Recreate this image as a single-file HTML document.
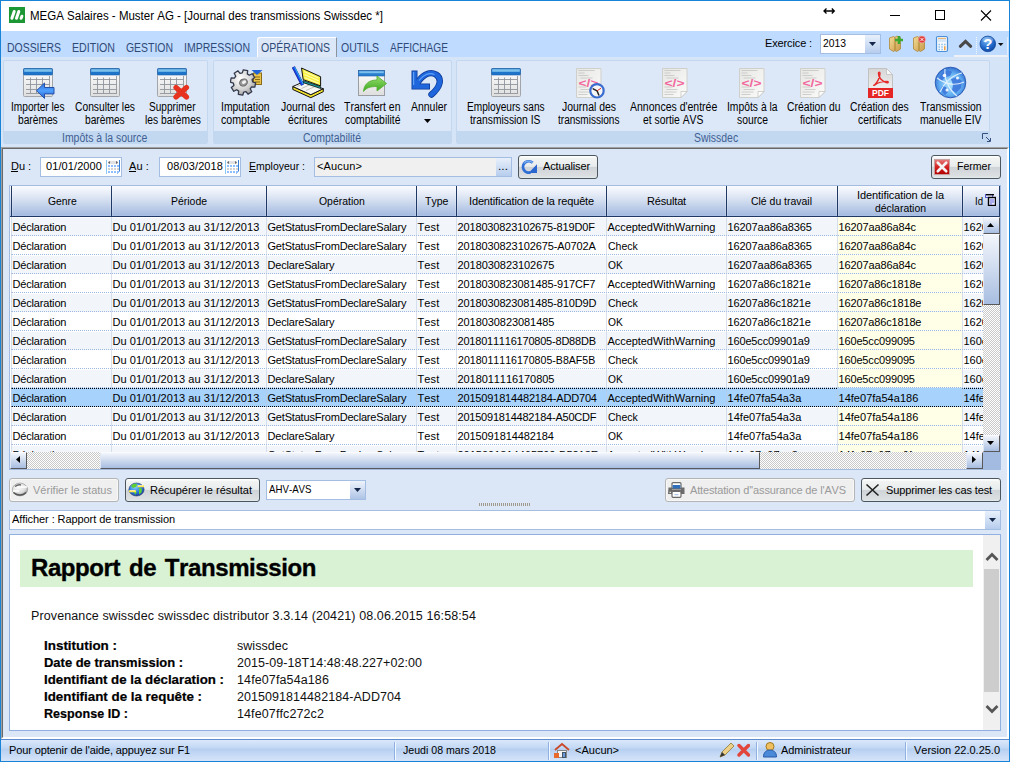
<!DOCTYPE html>
<html lang="fr">
<head>
<meta charset="utf-8">
<title>MEGA Salaires - Muster AG - [Journal des transmissions Swissdec *]</title>
<style>
html,body{margin:0;padding:0}
body{width:1010px;height:762px;overflow:hidden;position:relative;background:#fff;font-family:"Liberation Sans",sans-serif;font-size:11px;color:#000;font-kerning:none}
div,span,section,header,footer,nav,button,svg,table{position:absolute;box-sizing:border-box}
.t{white-space:pre;display:block;transform-origin:0 50%}
.g{left:0;top:0;width:0;height:0}
button{font:inherit;margin:0;padding:0;color:inherit}
.btn{border:1px solid #4b565e;border-radius:3px;background:linear-gradient(#fff 0,#fff 1px,#f2f4f4 2px,#e9ecec 47%,#cfd4d8 52%,#dcdfe2 92%,#e2eeee 100%)}
.btn.dis{border-color:#b4b4b4;background:#efefef;box-shadow:inset 0 0 0 1px #f8f8f8}
.inp{border:1px solid #a3bde3;background:#fff}
.hd{background:linear-gradient(#f4f7fc 0,#dbe5f5 30%,#a9c0e3 85%,#c3d3ec 100%);border-right:1px solid #2b4b7c}
.r{left:0;width:972px;height:19px;border-bottom:1px dotted #9db9df;border-top:1px solid #fff}
.r .t{margin-top:-1px}
.r>div{margin-top:-1px;height:18px!important}
.ra{background:#f2f6fb}
.rs{background:#a6d2fb;border-top:1px dotted #000;border-bottom:1px dotted #000}
</style>
</head>
<body>
<header class="g">
<div style="left:0px;top:0px;width:1010px;height:762px;background:#dbe7f7;border:1px solid #1883d7"></div>
<div style="left:1px;top:1px;width:1008px;height:30px;background:#fff"></div>
<svg style="left:9px;top:7px" width="16" height="16" viewBox="0 0 16 16"><rect width="16" height="16" fill="#1d9733"/><path d="M2.900 11.300L5.200 4.500M7.500 11.300L9.800 4.500M12.100 11.300L12.900 9.200" stroke="#fff" stroke-width="3" stroke-linecap="round"/></svg>
<span class="t" style="left:30.00px;top:7.84px;font-size:12px;line-height:16px;transform:scaleX(0.9589);">MEGA Salaires - Muster AG - [Journal des transmissions Swissdec *]</span>
<svg style="left:820px;top:0" width="190" height="31" viewBox="0 0 190 31" fill="none" stroke="#000" stroke-width="1"><path d="M70 15.5h10"/><rect x="115.5" y="10.5" width="9" height="9"/><path d="M161 10.500l10 10M171 10.500l-10 10" stroke-width="1.100"/><path d="M4.500 11h9.500M6.500 8.500l-2.500 2.500 2.500 2.500M11.800 8.500l2.500 2.500-2.500 2.500" stroke-width="1.300"/></svg>
</header>
<nav class="g">
<div style="left:1px;top:31px;width:1008px;height:26px;background:#bfdbff"></div>
<div style="left:1px;top:57px;width:1008px;height:90px;background:#d6e4f7"></div>
<div style="left:257px;top:37px;width:80px;height:20px;background:#dce7f7;border:1px solid;border-color:#fff #8c929c #dce7f7 #fff;border-bottom:none;border-radius:3px 1px 0 0"></div>
<span class="t" style="left:7.00px;top:39.84px;font-size:12px;line-height:16px;transform:scaleX(0.8707);color:#2f4a78;">DOSSIERS</span>
<span class="t" style="left:72.00px;top:39.84px;font-size:12px;line-height:16px;transform:scaleX(0.8835);color:#2f4a78;">EDITION</span>
<span class="t" style="left:126.00px;top:39.84px;font-size:12px;line-height:16px;transform:scaleX(0.8703);color:#2f4a78;">GESTION</span>
<span class="t" style="left:184.00px;top:39.84px;font-size:12px;line-height:16px;transform:scaleX(0.8760);color:#2f4a78;">IMPRESSION</span>
<span class="t" style="left:261.00px;top:39.84px;font-size:12px;line-height:16px;transform:scaleX(0.8770);color:#2f4a78;">OPÉRATIONS</span>
<span class="t" style="left:341.00px;top:39.84px;font-size:12px;line-height:16px;transform:scaleX(0.8768);color:#2f4a78;">OUTILS</span>
<span class="t" style="left:390.00px;top:39.84px;font-size:12px;line-height:16px;transform:scaleX(0.8446);color:#2f4a78;">AFFICHAGE</span>
<span class="t" style="left:765.00px;top:35.69px;font-size:11px;line-height:15px;letter-spacing:-0.129px;">Exercice :</span>
<div class="inp" style="left:820px;top:34px;width:61px;height:20px;"></div>
<span class="t" style="left:823.00px;top:35.69px;font-size:11px;line-height:15px;transform:scaleX(0.9399);">2013</span>
<div style="left:865px;top:35px;width:15px;height:18px;background:linear-gradient(#e8f0fb,#b7cdee)"></div>
<svg style="left:868px;top:41px" width="9" height="6"><path d="M1 1h7l-3.500 4z" fill="#15284b"/></svg>
<div style="left:3px;top:60px;width:205px;height:84px;border:1px solid #c3d7ef;border-radius:2px;background:#dce8f8"></div>
<div style="left:4px;top:131px;width:203px;height:13px;background:#c2d8f0;border-radius:0 0 2px 2px"></div>
<span class="t" style="left:62.31px;top:129.84px;font-size:12px;line-height:16px;transform:scaleX(0.8708);color:#3f5f93;">Impôts à la source</span>
<div style="left:213px;top:60px;width:239px;height:84px;border:1px solid #c3d7ef;border-radius:2px;background:#dce8f8"></div>
<div style="left:214px;top:131px;width:237px;height:13px;background:#c2d8f0;border-radius:0 0 2px 2px"></div>
<span class="t" style="left:302.96px;top:129.84px;font-size:12px;line-height:16px;transform:scaleX(0.8708);color:#3f5f93;">Comptabilité</span>
<div style="left:456px;top:60px;width:534px;height:84px;border:1px solid #c3d7ef;border-radius:2px;background:#dce8f8"></div>
<div style="left:457px;top:131px;width:532px;height:13px;background:#c2d8f0;border-radius:0 0 2px 2px"></div>
<span class="t" style="left:693.93px;top:129.84px;font-size:12px;line-height:16px;transform:scaleX(0.8708);color:#3f5f93;">Swissdec</span>
<svg width="0" height="0" style="left:0;top:0"><defs><linearGradient id="gTb" x1="0" y1="0" x2="0" y2="1"><stop offset="0" stop-color="#fff"/><stop offset="1" stop-color="#dedede"/></linearGradient><linearGradient id="gAr" x1="0" y1="0" x2="0" y2="1"><stop offset="0" stop-color="#2f6fd8"/><stop offset="0.5" stop-color="#4fa0ff"/><stop offset="1" stop-color="#2a5fc8"/></linearGradient><linearGradient id="gGr" x1="0" y1="0" x2="0" y2="1"><stop offset="0" stop-color="#9be070"/><stop offset="1" stop-color="#3aa820"/></linearGradient><linearGradient id="gUn" x1="0" y1="0" x2="1" y2="1"><stop offset="0" stop-color="#3f8cf0"/><stop offset="1" stop-color="#0f48b8"/></linearGradient><linearGradient id="gPd" x1="0" y1="0" x2="0" y2="1"><stop offset="0" stop-color="#d6d6d6"/><stop offset="1" stop-color="#fafafa"/></linearGradient><linearGradient id="gDc" x1="0" y1="0" x2="1" y2="1"><stop offset="0" stop-color="#e6e6e4"/><stop offset="1" stop-color="#fbfbfa"/></linearGradient><radialGradient id="gGe" cx="0.4" cy="0.35" r="0.7"><stop offset="0" stop-color="#ffffff"/><stop offset="0.6" stop-color="#d4d4d4"/><stop offset="1" stop-color="#9a9a9a"/></radialGradient><radialGradient id="gGl" cx="0.5" cy="0.55" r="0.6"><stop offset="0" stop-color="#b4e6ff"/><stop offset="0.6" stop-color="#62aef2"/><stop offset="1" stop-color="#2a62c8"/></radialGradient><linearGradient id="gFx" x1="0" y1="0" x2="0" y2="1"><stop offset="0" stop-color="#f0a0a0"/><stop offset="0.45" stop-color="#dc4040"/><stop offset="0.5" stop-color="#c81010"/><stop offset="1" stop-color="#b00000"/></linearGradient></defs></svg>
<svg style="left:23px;top:68px" width="32" height="32" viewBox="0 0 32 32"><rect x="0.5" y="0.5" width="29" height="28" rx="1" fill="url(#gTb)" stroke="#a2a6aa"/><rect x="0.5" y="0.5" width="29" height="6.5" rx="1" fill="#1d74c9" stroke="#1a60b0" stroke-width="0.6"/><rect x="1.2" y="1.2" width="27.600" height="2.6" fill="#7cc0ec"/><path d="M3 11.500h23.500M3 16.500h23.500M3 21.500h23.500M3 25.500h23.500M7.500 9.500v16M13.500 9.500v16M19.500 9.500v16M26.500 8v18" stroke="#8e959c" fill="none" stroke-width="0.9"/><path d="M31 19.500h-9.500v-4.500l-8 7.700 8 7.700v-4.500h9.500z" fill="url(#gAr)" stroke="#2450a8" stroke-linejoin="round"/></svg>
<span class="t" style="left:10.75px;top:98.84px;font-size:12px;line-height:16px;transform:scaleX(0.8445);">Importer les</span>
<span class="t" style="left:17.65px;top:111.84px;font-size:12px;line-height:16px;transform:scaleX(0.8503);">barèmes</span>
<svg style="left:90px;top:68px" width="30" height="29" viewBox="0 0 30 29"><rect x="0.5" y="0.5" width="29" height="28" rx="1" fill="url(#gTb)" stroke="#a2a6aa"/><rect x="0.5" y="0.5" width="29" height="6.5" rx="1" fill="#1d74c9" stroke="#1a60b0" stroke-width="0.6"/><rect x="1.2" y="1.2" width="27.600" height="2.6" fill="#7cc0ec"/><path d="M3 11.500h23.500M3 16.500h23.500M3 21.500h23.500M3 25.500h23.500M7.500 9.500v16M13.500 9.500v16M19.500 9.500v16M26.500 8v18" stroke="#8e959c" fill="none" stroke-width="0.9"/></svg>
<span class="t" style="left:74.50px;top:98.84px;font-size:12px;line-height:16px;transform:scaleX(0.8568);">Consulter les</span>
<span class="t" style="left:84.65px;top:111.84px;font-size:12px;line-height:16px;transform:scaleX(0.8503);">barèmes</span>
<svg style="left:157px;top:68px" width="33" height="32" viewBox="0 0 33 32"><rect x="0.5" y="0.5" width="29" height="28" rx="1" fill="url(#gTb)" stroke="#a2a6aa"/><rect x="0.5" y="0.5" width="29" height="6.5" rx="1" fill="#1d74c9" stroke="#1a60b0" stroke-width="0.6"/><rect x="1.2" y="1.2" width="27.600" height="2.6" fill="#7cc0ec"/><path d="M3 11.500h23.500M3 16.500h23.500M3 21.500h23.500M3 25.500h23.500M7.500 9.500v16M13.500 9.500v16M19.500 9.500v16M26.500 8v18" stroke="#8e959c" fill="none" stroke-width="0.9"/><path d="M19 19.500l10.500 9.500M29.500 19.500l-10.500 9.500" stroke="#e6321e" stroke-width="5.200" stroke-linecap="round"/></svg>
<span class="t" style="left:149.25px;top:98.84px;font-size:12px;line-height:16px;transform:scaleX(0.8401);">Supprimer</span>
<span class="t" style="left:144.50px;top:111.84px;font-size:12px;line-height:16px;transform:scaleX(0.8568);">les barèmes</span>
<svg style="left:230px;top:68px" width="34" height="30" viewBox="0 0 34 30"><rect x="23.500" y="5" width="8" height="11.500" fill="#e8c44e" stroke="#8a6a14"/><path d="M25 9h5M25 11.500h5M25 14h5" stroke="#8a6a14"/><path d="M21.500 2h11l-5.500 5z" fill="#1f63d6"/><g transform="translate(0,1.500)"><path d="M22.6 12.3L25.7 13.3L24.8 17.7L21.6 17.3L20.2 19.3L21.8 22.2L18.0 24.7L16.0 22.1L13.7 22.6L12.7 25.7L8.3 24.8L8.7 21.6L6.7 20.2L3.8 21.8L1.3 18.0L3.9 16.0L3.4 13.7L0.3 12.7L1.2 8.3L4.4 8.7L5.8 6.7L4.2 3.8L8.0 1.3L10.0 3.9L12.3 3.4L13.3 0.3L17.7 1.2L17.3 4.4L19.3 5.8L22.2 4.2L24.7 8.0L22.1 10.0z" fill="url(#gGe)" stroke="#343a4c" stroke-width="1.300" stroke-linejoin="round"/><ellipse cx="13.500" cy="13" rx="4" ry="3.4" transform="rotate(-30 13.5 13)" fill="#9a9a9a" stroke="#6a6a6a"/><ellipse cx="14" cy="12.600" rx="2.2" ry="1.6" transform="rotate(-30 14 12.6)" fill="#f4f4f4"/></g></svg>
<span class="t" style="left:221.25px;top:98.84px;font-size:12px;line-height:16px;transform:scaleX(0.8656);">Imputation</span>
<span class="t" style="left:221.00px;top:111.84px;font-size:12px;line-height:16px;transform:scaleX(0.8850);">comptable</span>
<svg style="left:291px;top:66px" width="34" height="34" viewBox="0 0 34 34"><path d="M1.800 20.500v3l18 8.200 12.500-6v-3l-12.500 6z" fill="#f2e030" stroke="#111" stroke-width="1"/><path d="M1.800 20.500l9.800-4.300 20.700 6.500-12.500 6z" fill="#f6f6f2" stroke="#111" stroke-width="1"/><path d="M6 20.500l9-4M10.500 22.500l9-4M15 24.500l9-4" stroke="#b4b4ac" stroke-width="0.8"/><path d="M12.200 14.600l17.400 6v2l-17.400-6z" fill="#16a0a0" stroke="#111" stroke-width="0.7"/><path d="M10.500 2l19.100 8.700v9.200l-17.400-6.300z" fill="#f8f040" stroke="#111" stroke-width="1"/><path d="M13 5.500l14.500 6.500M13.300 8.500l14.500 6.300M13.600 11.500l14.300 6" stroke="#fffcb0" stroke-width="1.200"/><path d="M2.400 0.900l9.200 18" stroke="#10208a" stroke-width="3.400"/><path d="M2.400 0.900l9.200 18" stroke="#1c46e8" stroke-width="2.200"/><path d="M3.600 1.200l8.600 17" stroke="#30d8f8" stroke-width="0.8"/></svg>
<span class="t" style="left:280.50px;top:98.84px;font-size:12px;line-height:16px;transform:scaleX(0.8704);">Journal des</span>
<span class="t" style="left:287.75px;top:111.84px;font-size:12px;line-height:16px;transform:scaleX(0.8584);">écritures</span>
<svg style="left:358px;top:70px" width="30" height="27" viewBox="0 0 30 27"><rect x="0.500" y="0.500" width="26" height="25" fill="url(#gTb)" stroke="#9a9ea2"/><rect x="0.500" y="0.500" width="26" height="5.500" fill="#2a7fd0" stroke="#1a60b0" stroke-width="0.6"/><rect x="1.200" y="1.200" width="24.600" height="2" fill="#7cc0ec"/><path d="M5.500 21.500c0.500-7 5-11.500 13.500-11.500v-4l9.500 7.500-9.500 7.500v-4.500c-6.500 0-10.500 1-13.500 5z" fill="url(#gGr)" stroke="#58b038" stroke-width="0.9" stroke-linejoin="round"/></svg>
<span class="t" style="left:344.25px;top:98.84px;font-size:12px;line-height:16px;transform:scaleX(0.8734);">Transfert en</span>
<span class="t" style="left:344.75px;top:111.84px;font-size:12px;line-height:16px;transform:scaleX(0.8668);">comptabilité</span>
<svg style="left:411px;top:69px" width="33" height="30" viewBox="0 0 33 30"><g fill="none" stroke-linecap="butt"><path d="M3.500 1.500V17.500H19" stroke="#0d3a98" stroke-width="6"/><path d="M6 15C10 7 18 1.500 25 5.500C31 9.500 30 17.500 20.500 25.500" stroke="#0d3a98" stroke-width="6.400" stroke-linecap="round"/><path d="M3.500 2.300V17.500H18.200" stroke="#1f66dc" stroke-width="4.400"/><path d="M6 15C10 7 18 1.500 25 5.500C31 9.500 30 17.500 20.500 25.500" stroke="#1f66dc" stroke-width="4.800" stroke-linecap="round"/><path d="M2.600 3V16M8 11.500C12 6 18 3 23.500 5.500" stroke="#6fb0ff" stroke-width="1.200" opacity="0.8"/></g></svg>
<span class="t" style="left:410.50px;top:98.84px;font-size:12px;line-height:16px;transform:scaleX(0.8704);">Annuler</span>
<svg style="left:491px;top:68px" width="30" height="29" viewBox="0 0 30 29"><rect x="0.5" y="0.5" width="29" height="28" rx="1" fill="url(#gTb)" stroke="#a2a6aa"/><rect x="0.5" y="0.5" width="29" height="6.5" rx="1" fill="#1d74c9" stroke="#1a60b0" stroke-width="0.6"/><rect x="1.2" y="1.2" width="27.600" height="2.6" fill="#7cc0ec"/><path d="M3 11.500h23.500M3 16.500h23.500M3 21.500h23.500M3 25.500h23.500M7.500 9.500v16M13.500 9.500v16M19.500 9.500v16M26.500 8v18" stroke="#8e959c" fill="none" stroke-width="0.9"/></svg>
<span class="t" style="left:466.70px;top:98.84px;font-size:12px;line-height:16px;transform:scaleX(0.8431);">Employeurs sans</span>
<span class="t" style="left:470.30px;top:111.84px;font-size:12px;line-height:16px;transform:scaleX(0.8583);">transmission IS</span>
<svg style="left:576px;top:68px" width="32" height="32" viewBox="0 0 32 32"><path d="M0.5 0.5h24.500v23l-6 6h-18.500z" fill="url(#gDc)" stroke="#cfcfcc"/><path d="M2.500 2.500h16M2.500 5h6M2.500 7.500h10M4.500 10h12M2.500 19h8M4.500 21.500h11M2.500 24h12M2.500 26.500h9" stroke="#c4c4c0" stroke-width="0.8"/><text x="12.500" y="18.800" text-anchor="middle" textLength="20" lengthAdjust="spacingAndGlyphs" font-family="Liberation Sans,sans-serif" font-weight="700" font-size="10" fill="#f2679c">&lt;/&gt;</text><path d="M19 29.500v-6h6z" fill="#fdfdfd" stroke="#bdbdb8" stroke-width="0.7"/><circle cx="21" cy="22.800" r="6.700" fill="#f6f6f6" stroke="#3a6cd0" stroke-width="2.200"/><path d="M21 22.800l-3.800-2M21 22.800l1.800 4.200" stroke="#222" stroke-width="1.500" stroke-linecap="round"/><path d="M21 22.800l4-2.500" stroke="#e03020" stroke-width="1"/></svg>
<span class="t" style="left:561.50px;top:98.84px;font-size:12px;line-height:16px;transform:scaleX(0.8704);">Journal des</span>
<span class="t" style="left:557.75px;top:111.84px;font-size:12px;line-height:16px;transform:scaleX(0.8384);">transmissions</span>
<svg style="left:662px;top:68px" width="26" height="30" viewBox="0 0 26 30"><path d="M0.5 0.5h24.500v23l-6 6h-18.500z" fill="url(#gDc)" stroke="#cfcfcc"/><path d="M2.500 2.500h16M2.500 5h6M2.500 7.500h10M4.500 10h12M2.500 19h8M4.500 21.500h11M2.500 24h12M2.500 26.500h9" stroke="#c4c4c0" stroke-width="0.8"/><text x="12.500" y="18.800" text-anchor="middle" textLength="20" lengthAdjust="spacingAndGlyphs" font-family="Liberation Sans,sans-serif" font-weight="700" font-size="10" fill="#f2679c">&lt;/&gt;</text><path d="M19 29.500v-6h6z" fill="#fdfdfd" stroke="#bdbdb8" stroke-width="0.7"/></svg>
<span class="t" style="left:629.85px;top:98.84px;font-size:12px;line-height:16px;transform:scaleX(0.8757);">Annonces d'entrée</span>
<span class="t" style="left:643.30px;top:111.84px;font-size:12px;line-height:16px;transform:scaleX(0.8625);">et sortie AVS</span>
<svg style="left:739px;top:68px" width="26" height="30" viewBox="0 0 26 30"><path d="M0.5 0.5h24.500v23l-6 6h-18.500z" fill="url(#gDc)" stroke="#cfcfcc"/><path d="M2.500 2.500h16M2.500 5h6M2.500 7.500h10M4.500 10h12M2.500 19h8M4.500 21.500h11M2.500 24h12M2.500 26.500h9" stroke="#c4c4c0" stroke-width="0.8"/><text x="12.500" y="18.800" text-anchor="middle" textLength="20" lengthAdjust="spacingAndGlyphs" font-family="Liberation Sans,sans-serif" font-weight="700" font-size="10" fill="#f2679c">&lt;/&gt;</text><path d="M19 29.500v-6h6z" fill="#fdfdfd" stroke="#bdbdb8" stroke-width="0.7"/></svg>
<span class="t" style="left:727.21px;top:98.84px;font-size:12px;line-height:16px;transform:scaleX(0.8617);">Impôts à la</span>
<span class="t" style="left:736.98px;top:111.84px;font-size:12px;line-height:16px;transform:scaleX(0.8617);">source</span>
<svg style="left:800px;top:68px" width="26" height="30" viewBox="0 0 26 30"><path d="M0.5 0.5h24.500v23l-6 6h-18.500z" fill="url(#gDc)" stroke="#cfcfcc"/><path d="M2.500 2.500h16M2.500 5h6M2.500 7.500h10M4.500 10h12M2.500 19h8M4.500 21.500h11M2.500 24h12M2.500 26.500h9" stroke="#c4c4c0" stroke-width="0.8"/><text x="12.500" y="18.800" text-anchor="middle" textLength="20" lengthAdjust="spacingAndGlyphs" font-family="Liberation Sans,sans-serif" font-weight="700" font-size="10" fill="#f2679c">&lt;/&gt;</text><path d="M19 29.500v-6h6z" fill="#fdfdfd" stroke="#bdbdb8" stroke-width="0.7"/></svg>
<span class="t" style="left:786.77px;top:98.84px;font-size:12px;line-height:16px;transform:scaleX(0.8617);">Création du</span>
<span class="t" style="left:799.71px;top:111.84px;font-size:12px;line-height:16px;transform:scaleX(0.8617);">fichier</span>
<svg style="left:868px;top:68px" width="26" height="30" viewBox="0 0 26 30"><path d="M0.500 0.500h18l6 6v23h-24z" fill="url(#gPd)" stroke="#c2c2c2"/><path d="M18.500 0.500v6h6z" fill="#f8f8f8" stroke="#c2c2c2" stroke-width="0.8"/><path d="M6.500 17c3-2.500 5.500-8 5.500-11.500 0-1.600-1.600-1.600-1.600 0 0 4 4 8.500 8.500 9.200 1.800 0.300 1.800-1.300 0-1.300-4 0-8.500 1-12 3.400-1.600 1.200-1.300 0.200-0.400 0.200z" fill="none" stroke="#e62a2a" stroke-width="1.400" stroke-linejoin="round"/><rect x="0" y="20" width="25" height="10" fill="#e62626"/><text x="12.500" y="28.300" text-anchor="middle" textLength="17" lengthAdjust="spacingAndGlyphs" font-family="Liberation Sans,sans-serif" font-weight="700" font-size="9" fill="#fff">PDF</text></svg>
<span class="t" style="left:850.19px;top:98.84px;font-size:12px;line-height:16px;transform:scaleX(0.8617);">Création des</span>
<span class="t" style="left:857.67px;top:111.84px;font-size:12px;line-height:16px;transform:scaleX(0.8617);">certificats</span>
<svg style="left:934px;top:66px" width="33" height="33" viewBox="0 0 33 33"><circle cx="16.500" cy="16.500" r="15.300" fill="url(#gGl)" stroke="#2a5cb8" stroke-width="1"/><path d="M9 6c3-2 7-2 9 0l-2 4-5 1-3 4-3-2c0-3 2-5 4-7zM17 13l6-2 5 4-1 7-5 5-4-3 1-5zM8 20l4 1 2 5-3 3c-3-2-4-5-3-9z" fill="#3d78dc" opacity="0.9"/><path d="M3 12c8 6 18 8 27 4M6 26c4-9 12-17 22-19M11 3c-1 9 3 20 12 27" fill="none" stroke="#eaf6ff" stroke-width="1.100" opacity="0.9"/><circle cx="10.500" cy="9.500" r="1.800" fill="#fff" opacity="0.9"/><circle cx="23.500" cy="12" r="1.500" fill="#fff" opacity="0.9"/><circle cx="13" cy="24" r="1.500" fill="#fff" opacity="0.9"/></svg>
<span class="t" style="left:919.76px;top:98.84px;font-size:12px;line-height:16px;transform:scaleX(0.8617);">Transmission</span>
<span class="t" style="left:919.75px;top:111.84px;font-size:12px;line-height:16px;transform:scaleX(0.8617);">manuelle EIV</span>
<svg style="left:423px;top:118px" width="9" height="6"><path d="M1 1h7l-3.500 4z" fill="#000"/></svg>
<svg style="left:982px;top:133px" width="9" height="9" fill="none" stroke="#33507f"><path d="M0.500 6V0.500H6M4 4l4 4M8.500 5v3.500H5"/></svg>
<div style="left:954px;top:55px;width:54px;height:2px;background:#eef1f6"></div>
<div style="left:1007px;top:37px;width:1px;height:19px;background:#e4ecf8"></div>
<svg style="left:886px;top:34px" width="120" height="22" viewBox="886 34 120 22"><defs><linearGradient id="gFo" x1="0" y1="0" x2="1" y2="1"><stop offset="0" stop-color="#f4dc98"/><stop offset="1" stop-color="#c89a48"/></linearGradient><radialGradient id="gHe" cx="0.4" cy="0.3" r="0.8"><stop offset="0" stop-color="#6fb0f4"/><stop offset="0.6" stop-color="#1f66c8"/><stop offset="1" stop-color="#0d3f94"/></radialGradient></defs><path d="M889.500 38l4-1.500 1.500 1 1.500-1.500 4 1.500v11.500l-4 2.500-1.500-1-1.500 1-4-2.500z" fill="url(#gFo)" stroke="#b08838" stroke-width="0.8"/><path d="M895 37.500v13" stroke="#a07828" stroke-width="0.9"/><path d="M899 36v8M895 40h8" stroke="#3aa832" stroke-width="2.600"/><path d="M913.500 38l4-1.500 1.500 1 1.500-1.500 4 1.500v11.500l-4 2.500-1.500-1-1.500 1-4-2.500z" fill="url(#gFo)" stroke="#b08838" stroke-width="0.8"/><path d="M919 37.500v13" stroke="#a07828" stroke-width="0.9"/><circle cx="922" cy="39.500" r="3.400" fill="#e03a3a" stroke="#f4b0b0" stroke-width="0.6"/><path d="M920.600 38.100l2.800 2.800M923.400 38.100l-2.800 2.800" stroke="#fff" stroke-width="1"/><rect x="936.500" y="36.500" width="11" height="15" rx="1.500" fill="#f6f9fd" stroke="#4a8fd8" stroke-width="1.200"/><rect x="938" y="38" width="8" height="4" fill="#d8e8f8"/><path d="M938 38.300h8" stroke="#f0a040" stroke-width="0.8"/><path d="M938.500 44.500h1.500M941.300 44.500h1.500M944 44.500h1.500M938.500 47h1.500M941.300 47h1.500M938.500 49.500h1.500M941.300 49.500h1.500" stroke="#8ec0ec" stroke-width="1.500"/><path d="M944.800 46.200v4" stroke="#f0a040" stroke-width="1.500"/><path d="M960.300 46.300l5.200-5 5.200 5" fill="none" stroke="#484848" stroke-width="3" stroke-linejoin="miter" stroke-linecap="round"/><path d="M976.500 37v18" stroke="#f4f8ff" stroke-width="1" stroke-dasharray="1 1"/><circle cx="987.800" cy="43.900" r="7.800" fill="url(#gHe)" stroke="#154a9c" stroke-width="0.800"/><ellipse cx="987.800" cy="39.800" rx="5.500" ry="3" fill="#fff" opacity="0.250"/><text x="987.800" y="49.300" text-anchor="middle" font-family="Liberation Sans,sans-serif" font-weight="700" font-size="15" fill="#fff">?</text><path d="M998 43h5.500l-2.750 3z" fill="#111"/></svg>
</nav>
<section class="g">
<div style="left:1px;top:147px;width:1008px;height:592px;border:1px solid;border-color:#a0a0a0 #fff #fff #a0a0a0"></div>
<div style="left:2px;top:148px;width:1006px;height:590px;border:1px solid;border-color:#696969 #fff #fff #696969"></div>
<span class="t" style="left:11.00px;top:158.69px;font-size:11px;line-height:15px;letter-spacing:-0.043px;">Du :</span>
<div style="left:11px;top:171px;width:7px;height:1px;background:#000"></div>
<div class="inp" style="left:40px;top:157px;width:82px;height:20px;"></div>
<span class="t" style="left:46.00px;top:158.69px;font-size:11px;line-height:15px;letter-spacing:0.095px;">01/01/2000</span>
<span class="t" style="left:129.00px;top:158.69px;font-size:11px;line-height:15px;letter-spacing:0.108px;">Au :</span>
<div style="left:129px;top:171px;width:7px;height:1px;background:#000"></div>
<div class="inp" style="left:159px;top:157px;width:82px;height:20px;"></div>
<span class="t" style="left:167.00px;top:158.69px;font-size:11px;line-height:15px;letter-spacing:0.095px;">08/03/2018</span>
<svg style="left:106px;top:160px" width="14" height="14" viewBox="0 0 14 14"><rect x="0" y="0" width="14" height="14" fill="#fff"/><path d="M0.500 0v14" stroke="#8cc8f0"/><path d="M13.500 0v11l-2 2.500" stroke="#3a80d0" fill="none"/><rect x="2" y="1" width="10" height="3" fill="#e2e2e2"/><path d="M4 1v3l-2-1.500zM10 1v3l2-1.500z" fill="#666"/><rect x="2" y="5" width="2" height="2" fill="#90bfff"/><rect x="5" y="5" width="2" height="2" fill="#90bfff"/><rect x="8" y="5" width="2" height="2" fill="#90bfff"/><rect x="11" y="5" width="2" height="2" fill="#90bfff"/><rect x="2" y="8" width="2" height="2" fill="#d2d2d2"/><rect x="5" y="8" width="2" height="2" fill="#d2d2d2"/><rect x="8" y="8" width="2" height="2" fill="#d2d2d2"/><rect x="11" y="8" width="2" height="2" fill="#d2d2d2"/><rect x="2" y="11" width="2" height="2" fill="#90bfff"/><rect x="5" y="11" width="2" height="2" fill="#90bfff"/><rect x="8" y="11" width="2" height="2" fill="#90bfff"/><rect x="11" y="11" width="2" height="2" fill="#90bfff"/></svg>
<svg style="left:225px;top:160px" width="14" height="14" viewBox="0 0 14 14"><rect x="0" y="0" width="14" height="14" fill="#fff"/><path d="M0.500 0v14" stroke="#8cc8f0"/><path d="M13.500 0v11l-2 2.500" stroke="#3a80d0" fill="none"/><rect x="2" y="1" width="10" height="3" fill="#e2e2e2"/><path d="M4 1v3l-2-1.500zM10 1v3l2-1.500z" fill="#666"/><rect x="2" y="5" width="2" height="2" fill="#90bfff"/><rect x="5" y="5" width="2" height="2" fill="#90bfff"/><rect x="8" y="5" width="2" height="2" fill="#90bfff"/><rect x="11" y="5" width="2" height="2" fill="#90bfff"/><rect x="2" y="8" width="2" height="2" fill="#d2d2d2"/><rect x="5" y="8" width="2" height="2" fill="#d2d2d2"/><rect x="8" y="8" width="2" height="2" fill="#d2d2d2"/><rect x="11" y="8" width="2" height="2" fill="#d2d2d2"/><rect x="2" y="11" width="2" height="2" fill="#90bfff"/><rect x="5" y="11" width="2" height="2" fill="#90bfff"/><rect x="8" y="11" width="2" height="2" fill="#90bfff"/><rect x="11" y="11" width="2" height="2" fill="#90bfff"/></svg>
<span class="t" style="left:249.00px;top:158.69px;font-size:11px;line-height:15px;transform:scaleX(0.9542);">Employeur :</span>
<div style="left:249px;top:171px;width:7px;height:1px;background:#000"></div>
<div class="inp" style="left:314px;top:157px;width:198px;height:20px;background:#f0f0f0"></div>
<span class="t" style="left:317.00px;top:158.69px;font-size:11px;line-height:15px;letter-spacing:0.137px;">&lt;Aucun&gt;</span>
<div style="left:496px;top:158px;width:15px;height:18px;background:linear-gradient(#e8f0fb,#b7cdee)"></div>
<span class="t" style="left:498.00px;top:158.69px;font-size:11px;line-height:15px;transform:scaleX(1.0907);">...</span>
<button class="btn" style="left:518px;top:155px;width:80px;height:24px;"></button>
<svg style="left:521px;top:159px" width="17" height="17" viewBox="0 0 17 17"><path d="M11.600 3.800A5.700 5.700 0 1 0 9.500 13.400" fill="none" stroke="#2f6fd6" stroke-width="2.800"/><path d="M11.600 3.800A5.700 5.700 0 0 0 3 4.500" fill="none" stroke="#7fb4f4" stroke-width="1.200"/><path d="M16 5.200V14H7.500z" fill="#2a66d0"/></svg>
<span class="t" style="left:543.00px;top:158.69px;font-size:11px;line-height:15px;letter-spacing:-0.130px;">Actualiser</span>
<button class="btn" style="left:931px;top:155px;width:70px;height:24px;"></button>
<svg style="left:934px;top:159px" width="16" height="16" viewBox="0 0 17 17"><defs><linearGradient id="rx" x1="0" y1="0" x2="0" y2="1"><stop offset="0" stop-color="#e88080"/><stop offset="0.500" stop-color="#d42020"/><stop offset="1" stop-color="#b00000"/></linearGradient></defs><rect x="0.500" y="0.500" width="16" height="16" fill="url(#rx)" stroke="#c8a0a0"/><path d="M4 4l9 9M13 4l-9 9" stroke="#f4f4f4" stroke-width="2.800" stroke-linecap="round"/></svg>
<span class="t" style="left:957.00px;top:158.69px;font-size:11px;line-height:15px;transform:scaleX(0.9593);">Fermer</span>
<div style="left:9px;top:185px;width:992px;height:285px;background:#a3bbe1"></div>
<div style="left:10px;top:186px;width:1px;height:266px;background:#fff"></div>
<div style="left:10px;top:186px;width:990px;height:31px;background:linear-gradient(#fafbfe 0,#e3eaf6 30%,#c3d2eb 65%,#a5bbe0 97%,#b3c8ea 100%);border-bottom:1px solid #1f3864;border-right:1px solid #1f3864"></div>
<div style="left:10px;top:186px;width:3px;height:30px;background:#1f3864;border-left:1px solid rgba(255,255,255,.18);border-right:1px solid rgba(255,255,255,.18);background-clip:padding-box"></div>
<div style="left:110px;top:186px;width:3px;height:30px;background:#1f3864;border-left:1px solid rgba(255,255,255,.18);border-right:1px solid rgba(255,255,255,.18);background-clip:padding-box"></div>
<div style="left:265px;top:186px;width:3px;height:30px;background:#1f3864;border-left:1px solid rgba(255,255,255,.18);border-right:1px solid rgba(255,255,255,.18);background-clip:padding-box"></div>
<div style="left:415px;top:186px;width:3px;height:30px;background:#1f3864;border-left:1px solid rgba(255,255,255,.18);border-right:1px solid rgba(255,255,255,.18);background-clip:padding-box"></div>
<div style="left:455px;top:186px;width:3px;height:30px;background:#1f3864;border-left:1px solid rgba(255,255,255,.18);border-right:1px solid rgba(255,255,255,.18);background-clip:padding-box"></div>
<div style="left:605px;top:186px;width:3px;height:30px;background:#1f3864;border-left:1px solid rgba(255,255,255,.18);border-right:1px solid rgba(255,255,255,.18);background-clip:padding-box"></div>
<div style="left:725px;top:186px;width:3px;height:30px;background:#1f3864;border-left:1px solid rgba(255,255,255,.18);border-right:1px solid rgba(255,255,255,.18);background-clip:padding-box"></div>
<div style="left:836px;top:186px;width:3px;height:30px;background:#1f3864;border-left:1px solid rgba(255,255,255,.18);border-right:1px solid rgba(255,255,255,.18);background-clip:padding-box"></div>
<div style="left:961px;top:186px;width:3px;height:30px;background:#1f3864;border-left:1px solid rgba(255,255,255,.18);border-right:1px solid rgba(255,255,255,.18);background-clip:padding-box"></div>
<span class="t" style="left:47.60px;top:193.69px;font-size:11px;line-height:15px;transform:scaleX(0.9420);">Genre</span>
<span class="t" style="left:171.00px;top:193.69px;font-size:11px;line-height:15px;transform:scaleX(0.9495);">Période</span>
<span class="t" style="left:318.60px;top:193.69px;font-size:11px;line-height:15px;transform:scaleX(0.9481);">Opération</span>
<span class="t" style="left:425.00px;top:193.69px;font-size:11px;line-height:15px;transform:scaleX(0.9610);">Type</span>
<span class="t" style="left:469.00px;top:193.69px;font-size:11px;line-height:15px;letter-spacing:-0.144px;">Identification de la requête</span>
<span class="t" style="left:647.00px;top:193.69px;font-size:11px;line-height:15px;letter-spacing:-0.169px;">Résultat</span>
<span class="t" style="left:751.00px;top:193.69px;font-size:11px;line-height:15px;transform:scaleX(0.9502);">Clé du travail</span>
<span class="t" style="left:857.00px;top:187.69px;font-size:11px;line-height:15px;letter-spacing:-0.084px;">Identification de la</span>
<span class="t" style="left:875.00px;top:200.69px;font-size:11px;line-height:15px;transform:scaleX(0.9477);">déclaration</span>
<span class="t" style="left:975.00px;top:193.69px;font-size:11px;line-height:15px;transform:scaleX(0.8720);">Id</span>
<svg style="left:985px;top:194px" width="11" height="12" viewBox="0 0 11 12"><rect x="0.5" y="0.5" width="7" height="3" fill="#dfe6ff" stroke="#5a5ad0"/><rect x="3.5" y="3.5" width="7" height="8" fill="#e8ecff" stroke="#000" stroke-width="1.4"/><path d="M5 6h4M5 8h4M5 10h2" stroke="#6a6ad8"/><path d="M1 0.7h8" stroke="#000" stroke-width="1.4"/></svg>
<div style="left:11px;top:217px;width:972px;height:235px;overflow:hidden;background:#fff">
<div class="r ra" style="top:0px">
<div style="left:827px;top:0px;width:124px;height:18px;background:#ffffe8"></div>
<span class="t" style="left:1.50px;top:2.69px;font-size:11px;line-height:15px;letter-spacing:-0.167px;">Déclaration</span>
<span class="t" style="left:101.50px;top:2.69px;font-size:11px;line-height:15px;letter-spacing:0.045px;">Du 01/01/2013 au 31/12/2013</span>
<span class="t" style="left:256.50px;top:2.69px;font-size:11px;line-height:15px;letter-spacing:-0.187px;">GetStatusFromDeclareSalary</span>
<span class="t" style="left:406.50px;top:2.69px;font-size:11px;line-height:15px;letter-spacing:0.102px;">Test</span>
<span class="t" style="left:446.50px;top:2.69px;font-size:11px;line-height:15px;letter-spacing:-0.147px;">2018030823102675-819D0F</span>
<span class="t" style="left:596.50px;top:2.69px;font-size:11px;line-height:15px;letter-spacing:-0.054px;">AcceptedWithWarning</span>
<span class="t" style="left:716.50px;top:2.69px;font-size:11px;line-height:15px;letter-spacing:-0.096px;">16207aa86a8365</span>
<span class="t" style="left:827.50px;top:2.69px;font-size:11px;line-height:15px;letter-spacing:-0.124px;">16207aa86a84c</span>
<span class="t" style="left:952.50px;top:2.69px;font-size:11px;line-height:15px;">1620</span>
</div>
<div class="r" style="top:19px">
<div style="left:827px;top:0px;width:124px;height:18px;background:#ffffe8"></div>
<span class="t" style="left:1.50px;top:2.69px;font-size:11px;line-height:15px;letter-spacing:-0.167px;">Déclaration</span>
<span class="t" style="left:101.50px;top:2.69px;font-size:11px;line-height:15px;letter-spacing:0.045px;">Du 01/01/2013 au 31/12/2013</span>
<span class="t" style="left:256.50px;top:2.69px;font-size:11px;line-height:15px;letter-spacing:-0.187px;">GetStatusFromDeclareSalary</span>
<span class="t" style="left:406.50px;top:2.69px;font-size:11px;line-height:15px;letter-spacing:0.102px;">Test</span>
<span class="t" style="left:446.50px;top:2.69px;font-size:11px;line-height:15px;letter-spacing:-0.104px;">2018030823102675-A0702A</span>
<span class="t" style="left:596.50px;top:2.69px;font-size:11px;line-height:15px;transform:scaleX(0.9558);">Check</span>
<span class="t" style="left:716.50px;top:2.69px;font-size:11px;line-height:15px;letter-spacing:-0.096px;">16207aa86a8365</span>
<span class="t" style="left:827.50px;top:2.69px;font-size:11px;line-height:15px;letter-spacing:-0.124px;">16207aa86a84c</span>
<span class="t" style="left:952.50px;top:2.69px;font-size:11px;line-height:15px;">1620</span>
</div>
<div class="r ra" style="top:38px">
<div style="left:827px;top:0px;width:124px;height:18px;background:#ffffe8"></div>
<span class="t" style="left:1.50px;top:2.69px;font-size:11px;line-height:15px;letter-spacing:-0.167px;">Déclaration</span>
<span class="t" style="left:101.50px;top:2.69px;font-size:11px;line-height:15px;letter-spacing:0.045px;">Du 01/01/2013 au 31/12/2013</span>
<span class="t" style="left:256.50px;top:2.69px;font-size:11px;line-height:15px;letter-spacing:-0.176px;">DeclareSalary</span>
<span class="t" style="left:406.50px;top:2.69px;font-size:11px;line-height:15px;letter-spacing:0.102px;">Test</span>
<span class="t" style="left:446.50px;top:2.69px;font-size:11px;line-height:15px;letter-spacing:-0.068px;">2018030823102675</span>
<span class="t" style="left:596.50px;top:2.69px;font-size:11px;line-height:15px;transform:scaleX(0.9312);">OK</span>
<span class="t" style="left:716.50px;top:2.69px;font-size:11px;line-height:15px;letter-spacing:-0.096px;">16207aa86a8365</span>
<span class="t" style="left:827.50px;top:2.69px;font-size:11px;line-height:15px;letter-spacing:-0.124px;">16207aa86a84c</span>
<span class="t" style="left:952.50px;top:2.69px;font-size:11px;line-height:15px;">1620</span>
</div>
<div class="r" style="top:57px">
<div style="left:827px;top:0px;width:124px;height:18px;background:#ffffe8"></div>
<span class="t" style="left:1.50px;top:2.69px;font-size:11px;line-height:15px;letter-spacing:-0.167px;">Déclaration</span>
<span class="t" style="left:101.50px;top:2.69px;font-size:11px;line-height:15px;letter-spacing:0.045px;">Du 01/01/2013 au 31/12/2013</span>
<span class="t" style="left:256.50px;top:2.69px;font-size:11px;line-height:15px;letter-spacing:-0.187px;">GetStatusFromDeclareSalary</span>
<span class="t" style="left:406.50px;top:2.69px;font-size:11px;line-height:15px;letter-spacing:0.102px;">Test</span>
<span class="t" style="left:446.50px;top:2.69px;font-size:11px;line-height:15px;letter-spacing:-0.125px;">2018030823081485-917CF7</span>
<span class="t" style="left:596.50px;top:2.69px;font-size:11px;line-height:15px;letter-spacing:-0.054px;">AcceptedWithWarning</span>
<span class="t" style="left:716.50px;top:2.69px;font-size:11px;line-height:15px;letter-spacing:-0.124px;">16207a86c1821e</span>
<span class="t" style="left:827.50px;top:2.69px;font-size:11px;line-height:15px;letter-spacing:-0.159px;">16207a86c1818e</span>
<span class="t" style="left:952.50px;top:2.69px;font-size:11px;line-height:15px;">1620</span>
</div>
<div class="r ra" style="top:76px">
<div style="left:827px;top:0px;width:124px;height:18px;background:#ffffe8"></div>
<span class="t" style="left:1.50px;top:2.69px;font-size:11px;line-height:15px;letter-spacing:-0.167px;">Déclaration</span>
<span class="t" style="left:101.50px;top:2.69px;font-size:11px;line-height:15px;letter-spacing:0.045px;">Du 01/01/2013 au 31/12/2013</span>
<span class="t" style="left:256.50px;top:2.69px;font-size:11px;line-height:15px;letter-spacing:-0.187px;">GetStatusFromDeclareSalary</span>
<span class="t" style="left:406.50px;top:2.69px;font-size:11px;line-height:15px;letter-spacing:0.102px;">Test</span>
<span class="t" style="left:446.50px;top:2.69px;font-size:11px;line-height:15px;letter-spacing:-0.135px;">2018030823081485-810D9D</span>
<span class="t" style="left:596.50px;top:2.69px;font-size:11px;line-height:15px;transform:scaleX(0.9558);">Check</span>
<span class="t" style="left:716.50px;top:2.69px;font-size:11px;line-height:15px;letter-spacing:-0.124px;">16207a86c1821e</span>
<span class="t" style="left:827.50px;top:2.69px;font-size:11px;line-height:15px;letter-spacing:-0.159px;">16207a86c1818e</span>
<span class="t" style="left:952.50px;top:2.69px;font-size:11px;line-height:15px;">1620</span>
</div>
<div class="r" style="top:95px">
<div style="left:827px;top:0px;width:124px;height:18px;background:#ffffe8"></div>
<span class="t" style="left:1.50px;top:2.69px;font-size:11px;line-height:15px;letter-spacing:-0.167px;">Déclaration</span>
<span class="t" style="left:101.50px;top:2.69px;font-size:11px;line-height:15px;letter-spacing:0.045px;">Du 01/01/2013 au 31/12/2013</span>
<span class="t" style="left:256.50px;top:2.69px;font-size:11px;line-height:15px;letter-spacing:-0.176px;">DeclareSalary</span>
<span class="t" style="left:406.50px;top:2.69px;font-size:11px;line-height:15px;letter-spacing:0.102px;">Test</span>
<span class="t" style="left:446.50px;top:2.69px;font-size:11px;line-height:15px;letter-spacing:-0.068px;">2018030823081485</span>
<span class="t" style="left:596.50px;top:2.69px;font-size:11px;line-height:15px;transform:scaleX(0.9312);">OK</span>
<span class="t" style="left:716.50px;top:2.69px;font-size:11px;line-height:15px;letter-spacing:-0.124px;">16207a86c1821e</span>
<span class="t" style="left:827.50px;top:2.69px;font-size:11px;line-height:15px;letter-spacing:-0.159px;">16207a86c1818e</span>
<span class="t" style="left:952.50px;top:2.69px;font-size:11px;line-height:15px;">1620</span>
</div>
<div class="r ra" style="top:114px">
<div style="left:827px;top:0px;width:124px;height:18px;background:#ffffe8"></div>
<span class="t" style="left:1.50px;top:2.69px;font-size:11px;line-height:15px;letter-spacing:-0.167px;">Déclaration</span>
<span class="t" style="left:101.50px;top:2.69px;font-size:11px;line-height:15px;letter-spacing:0.045px;">Du 01/01/2013 au 31/12/2013</span>
<span class="t" style="left:256.50px;top:2.69px;font-size:11px;line-height:15px;letter-spacing:-0.187px;">GetStatusFromDeclareSalary</span>
<span class="t" style="left:406.50px;top:2.69px;font-size:11px;line-height:15px;letter-spacing:0.102px;">Test</span>
<span class="t" style="left:446.50px;top:2.69px;font-size:11px;line-height:15px;letter-spacing:-0.210px;">2018011116170805-8D88DB</span>
<span class="t" style="left:596.50px;top:2.69px;font-size:11px;line-height:15px;letter-spacing:-0.054px;">AcceptedWithWarning</span>
<span class="t" style="left:716.50px;top:2.69px;font-size:11px;line-height:15px;letter-spacing:-0.151px;">160e5cc09901a9</span>
<span class="t" style="left:827.50px;top:2.69px;font-size:11px;line-height:15px;letter-spacing:-0.153px;">160e5cc099095</span>
<span class="t" style="left:952.50px;top:2.69px;font-size:11px;line-height:15px;">160e</span>
</div>
<div class="r" style="top:133px">
<div style="left:827px;top:0px;width:124px;height:18px;background:#ffffe8"></div>
<span class="t" style="left:1.50px;top:2.69px;font-size:11px;line-height:15px;letter-spacing:-0.167px;">Déclaration</span>
<span class="t" style="left:101.50px;top:2.69px;font-size:11px;line-height:15px;letter-spacing:0.045px;">Du 01/01/2013 au 31/12/2013</span>
<span class="t" style="left:256.50px;top:2.69px;font-size:11px;line-height:15px;letter-spacing:-0.187px;">GetStatusFromDeclareSalary</span>
<span class="t" style="left:406.50px;top:2.69px;font-size:11px;line-height:15px;letter-spacing:0.102px;">Test</span>
<span class="t" style="left:446.50px;top:2.69px;font-size:11px;line-height:15px;transform:scaleX(0.9634);">2018011116170805-B8AF5B</span>
<span class="t" style="left:596.50px;top:2.69px;font-size:11px;line-height:15px;transform:scaleX(0.9558);">Check</span>
<span class="t" style="left:716.50px;top:2.69px;font-size:11px;line-height:15px;letter-spacing:-0.151px;">160e5cc09901a9</span>
<span class="t" style="left:827.50px;top:2.69px;font-size:11px;line-height:15px;letter-spacing:-0.153px;">160e5cc099095</span>
<span class="t" style="left:952.50px;top:2.69px;font-size:11px;line-height:15px;">160e</span>
</div>
<div class="r ra" style="top:152px">
<div style="left:827px;top:0px;width:124px;height:18px;background:#ffffe8"></div>
<span class="t" style="left:1.50px;top:2.69px;font-size:11px;line-height:15px;letter-spacing:-0.167px;">Déclaration</span>
<span class="t" style="left:101.50px;top:2.69px;font-size:11px;line-height:15px;letter-spacing:0.045px;">Du 01/01/2013 au 31/12/2013</span>
<span class="t" style="left:256.50px;top:2.69px;font-size:11px;line-height:15px;letter-spacing:-0.176px;">DeclareSalary</span>
<span class="t" style="left:406.50px;top:2.69px;font-size:11px;line-height:15px;letter-spacing:0.102px;">Test</span>
<span class="t" style="left:446.50px;top:2.69px;font-size:11px;line-height:15px;letter-spacing:-0.068px;">2018011116170805</span>
<span class="t" style="left:596.50px;top:2.69px;font-size:11px;line-height:15px;transform:scaleX(0.9312);">OK</span>
<span class="t" style="left:716.50px;top:2.69px;font-size:11px;line-height:15px;letter-spacing:-0.151px;">160e5cc09901a9</span>
<span class="t" style="left:827.50px;top:2.69px;font-size:11px;line-height:15px;letter-spacing:-0.153px;">160e5cc099095</span>
<span class="t" style="left:952.50px;top:2.69px;font-size:11px;line-height:15px;">160e</span>
</div>
<div class="r rs" style="top:171px">
<div style="left:827px;top:0px;width:124px;height:18px;background:#a6d2fb"></div>
<span class="t" style="left:1.50px;top:2.69px;font-size:11px;line-height:15px;letter-spacing:-0.167px;">Déclaration</span>
<span class="t" style="left:101.50px;top:2.69px;font-size:11px;line-height:15px;letter-spacing:0.045px;">Du 01/01/2013 au 31/12/2013</span>
<span class="t" style="left:256.50px;top:2.69px;font-size:11px;line-height:15px;letter-spacing:-0.187px;">GetStatusFromDeclareSalary</span>
<span class="t" style="left:406.50px;top:2.69px;font-size:11px;line-height:15px;letter-spacing:0.102px;">Test</span>
<span class="t" style="left:446.50px;top:2.69px;font-size:11px;line-height:15px;letter-spacing:-0.166px;">2015091814482184-ADD704</span>
<span class="t" style="left:596.50px;top:2.69px;font-size:11px;line-height:15px;letter-spacing:-0.054px;">AcceptedWithWarning</span>
<span class="t" style="left:716.50px;top:2.69px;font-size:11px;line-height:15px;letter-spacing:0.030px;">14fe07fa54a3a</span>
<span class="t" style="left:827.50px;top:2.69px;font-size:11px;line-height:15px;letter-spacing:0.020px;">14fe07fa54a186</span>
<span class="t" style="left:952.50px;top:2.69px;font-size:11px;line-height:15px;">14fe</span>
</div>
<div class="r ra" style="top:190px">
<div style="left:827px;top:0px;width:124px;height:18px;background:#ffffe8"></div>
<span class="t" style="left:1.50px;top:2.69px;font-size:11px;line-height:15px;letter-spacing:-0.167px;">Déclaration</span>
<span class="t" style="left:101.50px;top:2.69px;font-size:11px;line-height:15px;letter-spacing:0.045px;">Du 01/01/2013 au 31/12/2013</span>
<span class="t" style="left:256.50px;top:2.69px;font-size:11px;line-height:15px;letter-spacing:-0.187px;">GetStatusFromDeclareSalary</span>
<span class="t" style="left:406.50px;top:2.69px;font-size:11px;line-height:15px;letter-spacing:0.102px;">Test</span>
<span class="t" style="left:446.50px;top:2.69px;font-size:11px;line-height:15px;letter-spacing:-0.214px;">2015091814482184-A50CDF</span>
<span class="t" style="left:596.50px;top:2.69px;font-size:11px;line-height:15px;transform:scaleX(0.9558);">Check</span>
<span class="t" style="left:716.50px;top:2.69px;font-size:11px;line-height:15px;letter-spacing:0.030px;">14fe07fa54a3a</span>
<span class="t" style="left:827.50px;top:2.69px;font-size:11px;line-height:15px;letter-spacing:0.020px;">14fe07fa54a186</span>
<span class="t" style="left:952.50px;top:2.69px;font-size:11px;line-height:15px;">14fe</span>
</div>
<div class="r" style="top:209px">
<div style="left:827px;top:0px;width:124px;height:18px;background:#ffffe8"></div>
<span class="t" style="left:1.50px;top:2.69px;font-size:11px;line-height:15px;letter-spacing:-0.167px;">Déclaration</span>
<span class="t" style="left:101.50px;top:2.69px;font-size:11px;line-height:15px;letter-spacing:0.045px;">Du 01/01/2013 au 31/12/2013</span>
<span class="t" style="left:256.50px;top:2.69px;font-size:11px;line-height:15px;letter-spacing:-0.176px;">DeclareSalary</span>
<span class="t" style="left:406.50px;top:2.69px;font-size:11px;line-height:15px;letter-spacing:0.102px;">Test</span>
<span class="t" style="left:446.50px;top:2.69px;font-size:11px;line-height:15px;letter-spacing:-0.099px;">2015091814482184</span>
<span class="t" style="left:596.50px;top:2.69px;font-size:11px;line-height:15px;transform:scaleX(0.9312);">OK</span>
<span class="t" style="left:716.50px;top:2.69px;font-size:11px;line-height:15px;letter-spacing:0.030px;">14fe07fa54a3a</span>
<span class="t" style="left:827.50px;top:2.69px;font-size:11px;line-height:15px;letter-spacing:0.020px;">14fe07fa54a186</span>
<span class="t" style="left:952.50px;top:2.69px;font-size:11px;line-height:15px;">14fe</span>
</div>
<div class="r ra" style="top:228px">
<div style="left:827px;top:0px;width:124px;height:18px;background:#ffffe8"></div>
<span class="t" style="left:1.50px;top:2.69px;font-size:11px;line-height:15px;letter-spacing:-0.167px;">Déclaration</span>
<span class="t" style="left:256.50px;top:2.69px;font-size:11px;line-height:15px;letter-spacing:-0.187px;">GetStatusFromDeclareSalary</span>
<span class="t" style="left:406.50px;top:2.69px;font-size:11px;line-height:15px;letter-spacing:0.102px;">Test</span>
<span class="t" style="left:446.50px;top:2.69px;font-size:11px;line-height:15px;">2015091814465792-B5218E</span>
<span class="t" style="left:596.50px;top:2.69px;font-size:11px;line-height:15px;letter-spacing:-0.054px;">AcceptedWithWarning</span>
<span class="t" style="left:716.50px;top:2.69px;font-size:11px;line-height:15px;">14fe07a97ae8c</span>
<span class="t" style="left:827.50px;top:2.69px;font-size:11px;line-height:15px;">14fe07a97ae9f</span>
<span class="t" style="left:952.50px;top:2.69px;font-size:11px;line-height:15px;">14fe</span>
</div>
<div style="left:0px;top:0px;width:1px;height:235px;background:rgba(190,203,224,.55)"></div>
<div style="left:100px;top:0px;width:1px;height:235px;background:rgba(190,203,224,.55)"></div>
<div style="left:255px;top:0px;width:1px;height:235px;background:rgba(190,203,224,.55)"></div>
<div style="left:405px;top:0px;width:1px;height:235px;background:rgba(190,203,224,.55)"></div>
<div style="left:445px;top:0px;width:1px;height:235px;background:rgba(190,203,224,.55)"></div>
<div style="left:595px;top:0px;width:1px;height:235px;background:rgba(190,203,224,.55)"></div>
<div style="left:715px;top:0px;width:1px;height:235px;background:rgba(190,203,224,.55)"></div>
<div style="left:826px;top:0px;width:1px;height:235px;background:rgba(190,203,224,.55)"></div>
<div style="left:951px;top:0px;width:1px;height:235px;background:rgba(190,203,224,.55)"></div>
</div>
<div style="left:983px;top:217px;width:17px;height:235px;background:#fff repeating-conic-gradient(#c9c9c9 0 25%,#fff 0 50%) 0 0/2px 2px"></div>
<div style="left:983px;top:217px;width:17px;height:17px;background:linear-gradient(#f3f6fb,#a7bde1);border-right:1px solid #585858;border-bottom:1px solid #585858;border-left:1px solid #dfe7f5;border-top:1px solid #fafbfe"></div>
<div style="left:983px;top:234px;width:17px;height:71px;background:linear-gradient(#f3f6fb,#a7bde1);border-right:1px solid #585858;border-bottom:1px solid #585858;border-left:1px solid #dfe7f5;border-top:1px solid #fafbfe"></div>
<div style="left:983px;top:435px;width:17px;height:17px;background:linear-gradient(#f3f6fb,#a7bde1);border-right:1px solid #585858;border-bottom:1px solid #585858;border-left:1px solid #dfe7f5;border-top:1px solid #fafbfe"></div>
<svg style="left:987px;top:223px" width="7" height="4"><path d="M0 4h7l-3.500-4z" fill="#000"/></svg>
<svg style="left:987px;top:441px" width="7" height="4"><path d="M0 0h7l-3.500 4z" fill="#000"/></svg>
<div style="left:11px;top:452px;width:972px;height:17px;background:#fff repeating-conic-gradient(#c9c9c9 0 25%,#fff 0 50%) 0 0/2px 2px"></div>
<div style="left:10px;top:452px;width:17px;height:17px;background:linear-gradient(#f3f6fb,#a7bde1);border-right:1px solid #585858;border-bottom:1px solid #585858;border-left:1px solid #dfe7f5;border-top:1px solid #fafbfe"></div>
<div style="left:966px;top:452px;width:17px;height:17px;background:linear-gradient(#f3f6fb,#a7bde1);border-right:1px solid #585858;border-bottom:1px solid #585858;border-left:1px solid #dfe7f5;border-top:1px solid #fafbfe"></div>
<div style="left:100px;top:452px;width:660px;height:17px;background:linear-gradient(#f3f6fb,#a7bde1);border-right:1px solid #585858;border-bottom:1px solid #585858;border-left:1px solid #dfe7f5;border-top:1px solid #fafbfe"></div>
<svg style="left:16px;top:456px" width="4" height="7"><path d="M4 0v7l-4-3.500z" fill="#000"/></svg>
<svg style="left:972px;top:456px" width="4" height="7"><path d="M0 0v7l4-3.500z" fill="#000"/></svg>
<button class="btn dis" style="left:9px;top:478px;width:110px;height:24px;"></button>
<span class="t" style="left:33.00px;top:482.69px;font-size:11px;line-height:15px;letter-spacing:0.008px;color:#9a9a9a;">Vérifier le status</span>
<button class="btn" style="left:125px;top:478px;width:135px;height:24px;"></button>
<span class="t" style="left:150.00px;top:482.69px;font-size:11px;line-height:15px;letter-spacing:-0.005px;">Récupérer le résultat</span>
<svg style="left:11px;top:482px" width="18" height="15" viewBox="0 0 18 15"><defs><radialGradient id="gW0" cx="0.4" cy="0.3" r="0.8"><stop offset="0" stop-color="#ffffff"/><stop offset="0.6" stop-color="#dcdcdc"/><stop offset="1" stop-color="#7a7a7a"/></radialGradient></defs><ellipse cx="9" cy="7.500" rx="7.600" ry="6.400" fill="url(#gW0)" stroke="#8a8a8a" stroke-width="0.6"/><path d="M2.500 10.500c3 3 9 3.500 12.500 0M4 4.500c2-1.500 4-2 6-1.500" stroke="#3a3a3a" stroke-width="1.500" fill="none" opacity="0.750"/><path d="M10 5h6M2 9h6" stroke="#fff" stroke-width="1.600"/></svg>
<svg style="left:128px;top:482px" width="18" height="15" viewBox="0 0 18 15"><defs><radialGradient id="gW1" cx="0.4" cy="0.3" r="0.8"><stop offset="0" stop-color="#8fd4ff"/><stop offset="0.5" stop-color="#2f7fe0"/><stop offset="1" stop-color="#0f2f90"/></radialGradient></defs><ellipse cx="8.500" cy="7.500" rx="7.600" ry="6.500" fill="url(#gW1)" stroke="#2a3a6a" stroke-width="0.6"/><path d="M3 4c1.500-2 4-2.500 6-2l-1 3-3 1zM11 6l3 0.500-0.500 4-2.500 2zM6 9.500l3 0.500-2 3z" fill="#5ed030"/><path d="M9.500 4.200h6.500M1 9.200h7" stroke="#ffe84a" stroke-width="1.900"/><path d="M10 3.500h5M2 8.500h5" stroke="#fff4c0" stroke-width="0.700"/></svg>
<div class="inp" style="left:266px;top:480px;width:100px;height:20px;"></div>
<span class="t" style="left:269.00px;top:481.69px;font-size:11px;line-height:15px;transform:scaleX(0.8801);">AHV-AVS</span>
<div style="left:350px;top:481px;width:15px;height:18px;background:linear-gradient(#eef3fb,#aec4e6)"></div>
<svg style="left:353px;top:487px" width="9" height="6"><path d="M1 1h7l-3.500 4z" fill="#15284b"/></svg>
<button class="btn dis" style="left:665px;top:478px;width:190px;height:24px;"></button>
<span class="t" style="left:690.00px;top:482.69px;font-size:11px;line-height:15px;letter-spacing:-0.152px;color:#9a9a9a;">Attestation d''assurance de l'AVS</span>
<svg style="left:668px;top:482px" width="17" height="16" viewBox="0 0 17 16"><rect x="4" y="0.700" width="9" height="6" rx="1" fill="#fff" stroke="#6a6a6a" stroke-width="1.200"/><rect x="4.600" y="3" width="7.800" height="3.500" fill="#2f6fba"/><path d="M0.500 5.500h3.500v2h9v-2h3.500v6.500h-16.500z" fill="#6b6b6b"/><rect x="4" y="9.500" width="9" height="5.800" rx="1" fill="#fff" stroke="#6a6a6a" stroke-width="1.200"/><path d="M6.500 12.700h4" stroke="#9ab8e0"/><path d="M1.500 10.300h1.500" stroke="#fff"/></svg>
<button class="btn" style="left:861px;top:478px;width:140px;height:24px;"></button>
<span class="t" style="left:886.00px;top:482.69px;font-size:11px;line-height:15px;letter-spacing:-0.128px;">Supprimer les cas test</span>
<svg style="left:865px;top:483px" width="15" height="14" viewBox="0 0 15 14"><path d="M1.500 1.500l12 11M13.500 1.500l-12 11" stroke="#222" stroke-width="1.600"/></svg>
<div style="left:479px;top:503px;width:51px;height:3px;background:repeating-linear-gradient(90deg,#a09a8c 0,#a09a8c 1px,transparent 1px,transparent 2px)"></div>
<div class="inp" style="left:9px;top:510px;width:992px;height:20px;"></div>
<span class="t" style="left:12.00px;top:511.69px;font-size:11px;line-height:15px;letter-spacing:-0.079px;">Afficher : Rapport de transmission</span>
<div style="left:985px;top:511px;width:15px;height:18px;background:linear-gradient(#e8f0fb,#b7cdee)"></div>
<svg style="left:988px;top:517px" width="9" height="6"><path d="M1 1h7l-3.500 4z" fill="#15284b"/></svg>
</section>
<section class="g">
<div style="left:9px;top:534px;width:992px;height:197px;background:#fff;border:1px solid #8fb0e0"></div>
<div style="left:20px;top:550px;width:953px;height:37px;background:#d9f2d4"></div>
<span class="t" style="left:31.00px;top:553.68px;font-size:24px;line-height:28px;word-spacing:2.5px;letter-spacing:-0.408px;font-weight:700;-webkit-text-stroke:0.35px #000;">Rapport de Transmission</span>
<span class="t" style="left:31.00px;top:607.72px;font-size:12.5px;line-height:16.5px;letter-spacing:0.115px;color:#111;">Provenance swissdec swissdec distributor 3.3.14 (20421) 08.06.2015 16:58:54</span>
<span class="t" style="left:44.00px;top:637.72px;font-size:12.5px;line-height:16.5px;transform:scaleX(1.0730);font-weight:700;-webkit-text-stroke:0.2px #000;">Institution :</span>
<span class="t" style="left:237.00px;top:637.72px;font-size:12.5px;line-height:16.5px;letter-spacing:0.036px;color:#111;">swissdec</span>
<span class="t" style="left:44.00px;top:654.72px;font-size:12.5px;line-height:16.5px;transform:scaleX(1.0368);font-weight:700;-webkit-text-stroke:0.2px #000;">Date de transmission :</span>
<span class="t" style="left:237.00px;top:654.72px;font-size:12.5px;line-height:16.5px;letter-spacing:0.064px;color:#111;">2015-09-18T14:48:48.227+02:00</span>
<span class="t" style="left:44.00px;top:671.72px;font-size:12.5px;line-height:16.5px;transform:scaleX(1.0621);font-weight:700;-webkit-text-stroke:0.2px #000;">Identifiant de la déclaration :</span>
<span class="t" style="left:237.00px;top:671.72px;font-size:12.5px;line-height:16.5px;letter-spacing:0.117px;color:#111;">14fe07fa54a186</span>
<span class="t" style="left:44.00px;top:688.72px;font-size:12.5px;line-height:16.5px;transform:scaleX(1.0680);font-weight:700;-webkit-text-stroke:0.2px #000;">Identifiant de la requête :</span>
<span class="t" style="left:237.00px;top:688.72px;font-size:12.5px;line-height:16.5px;letter-spacing:0.059px;color:#111;">2015091814482184-ADD704</span>
<span class="t" style="left:44.00px;top:705.72px;font-size:12.5px;line-height:16.5px;letter-spacing:0.050px;font-weight:700;-webkit-text-stroke:0.2px #000;">Response ID :</span>
<span class="t" style="left:237.00px;top:705.72px;font-size:12.5px;line-height:16.5px;letter-spacing:0.108px;color:#111;">14fe07ffc272c2</span>
<div style="left:983px;top:535px;width:17px;height:195px;background:#f0f0f0"></div>
<div style="left:984px;top:569px;width:15px;height:123px;background:#cdcdcd"></div>
<svg style="left:985px;top:551px" width="14" height="11" fill="none" stroke="#555" stroke-width="2.700"><path d="M1.500 9l5.500-5.500 5.500 5.500"/></svg>
<svg style="left:985px;top:703.500px" width="14" height="11" fill="none" stroke="#555" stroke-width="2.700"><path d="M1.500 2l5.500 5.500 5.500-5.500"/></svg>
</section>
<footer class="g">
<div style="left:1px;top:739px;width:1008px;height:22px;background:linear-gradient(#dbe8fa 0,#c4d9f5 35%,#b7d0f1 45%,#c6daf5 70%,#d6e4f8 100%);border-top:1px solid #5c8bd0"></div>
<div style="left:394px;top:742px;width:1px;height:18px;background:#8fb0e0"></div>
<div style="left:395px;top:742px;width:1px;height:18px;background:#f2f8ff"></div>
<div style="left:548px;top:742px;width:1px;height:18px;background:#8fb0e0"></div>
<div style="left:549px;top:742px;width:1px;height:18px;background:#f2f8ff"></div>
<div style="left:756px;top:742px;width:1px;height:18px;background:#8fb0e0"></div>
<div style="left:757px;top:742px;width:1px;height:18px;background:#f2f8ff"></div>
<div style="left:905px;top:742px;width:1px;height:18px;background:#8fb0e0"></div>
<div style="left:906px;top:742px;width:1px;height:18px;background:#f2f8ff"></div>
<span class="t" style="left:9.00px;top:742.69px;font-size:11px;line-height:15px;letter-spacing:-0.120px;">Pour optenir de l'aide, appuyez sur F1</span>
<span class="t" style="left:403.00px;top:742.69px;font-size:11px;line-height:15px;transform:scaleX(0.9626);">Jeudi 08 mars 2018</span>
<span class="t" style="left:575.00px;top:742.69px;font-size:11px;line-height:15px;">&lt;Aucun&gt;</span>
<span class="t" style="left:781.00px;top:742.69px;font-size:11px;line-height:15px;letter-spacing:-0.065px;">Administrateur</span>
<span class="t" style="left:914.00px;top:742.69px;font-size:11px;line-height:15px;letter-spacing:-0.013px;">Version 22.0.25.0</span>
<svg style="left:553px;top:741px" width="18" height="18" viewBox="0 0 18 18"><path d="M2 9l7-6 7 6" fill="none" stroke="#c84a2a" stroke-width="1.800"/><rect x="4.500" y="9.500" width="9" height="7" fill="#f4f4f4" stroke="#888"/><rect x="1" y="12" width="5" height="5" fill="#e86a2a"/><rect x="9.500" y="11.500" width="3" height="5" fill="#6a9ad8" stroke="#456"/></svg>
<svg style="left:718px;top:741px" width="32" height="18" viewBox="0 0 32 18"><path d="M2 16l2-5 9-9 3 3-9 9z" fill="#ecd088" stroke="#a08a50"/><path d="M2 16l2-5 3 3z" fill="#333"/><path d="M21 4.500l9.500 9.500M30.500 4.500l-9.500 9.500" stroke="#e2453a" stroke-width="3.400" stroke-linecap="round"/></svg>
<svg style="left:762px;top:741px" width="16" height="18" viewBox="0 0 16 18"><circle cx="8" cy="5.500" r="4" fill="#f0c060" stroke="#a07820"/><path d="M1.500 16c0-5 3-7 6.500-7s6.500 2 6.500 7z" fill="#4a8ad8" stroke="#2a5aa8"/></svg>
</footer>
</body>
</html>
